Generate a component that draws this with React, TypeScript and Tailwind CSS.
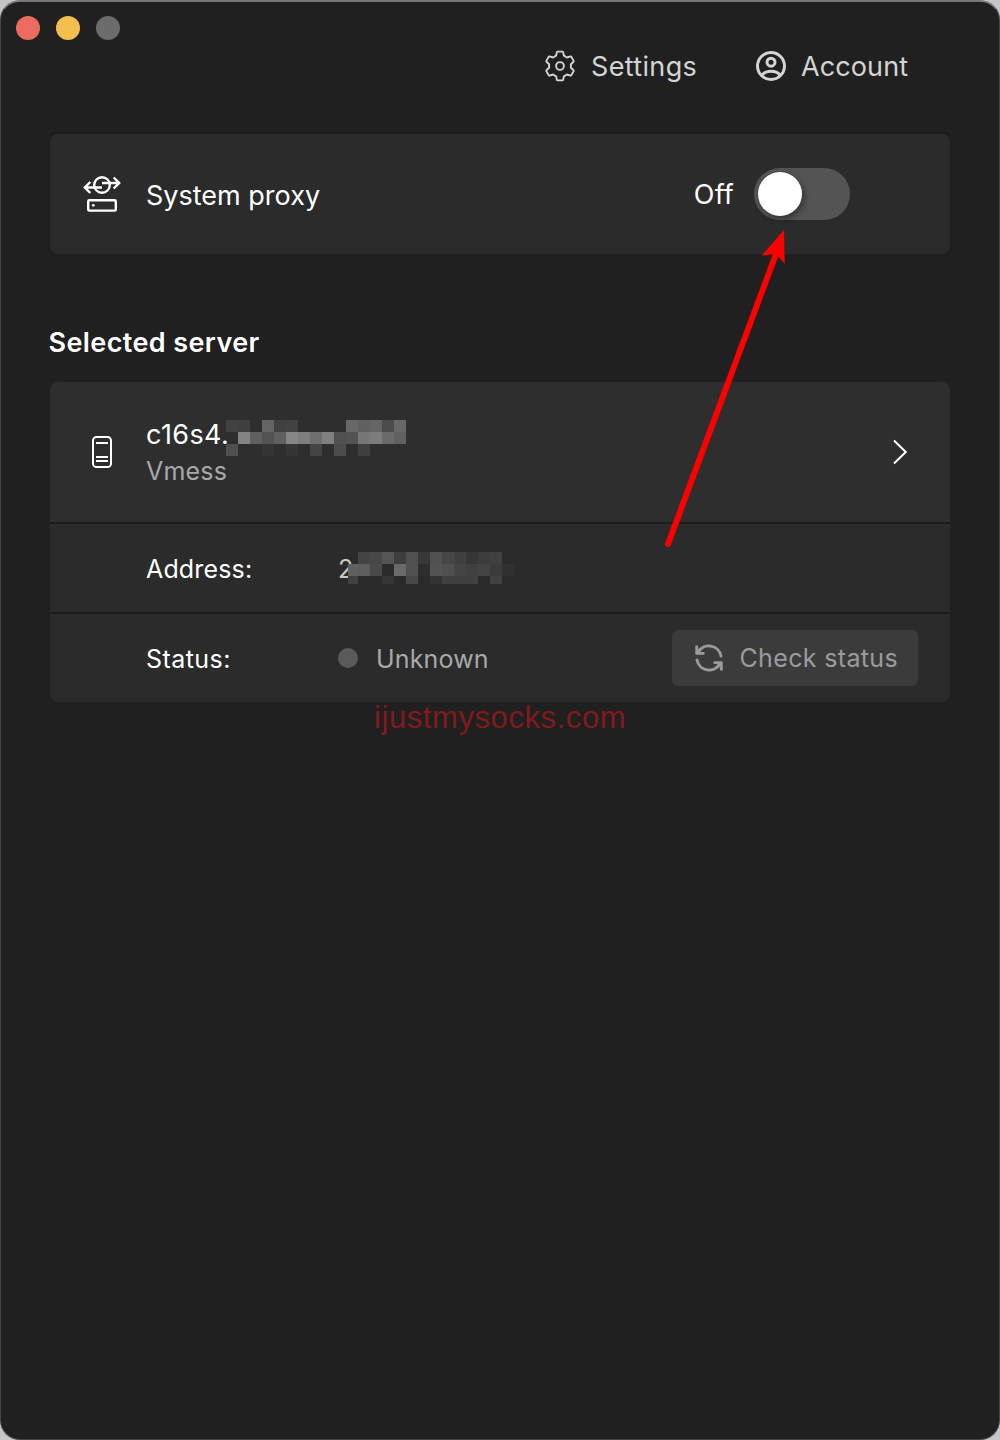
import React from "react";

const hostMosaic: string[][] = [
  ["#424242", "#404040", "", "#646464", "#404040", "#424242", "", "", "", "", "#686868", "#616161", "#666666", "#4c4c4c", "#686868"],
  ["", "#838383", "#606060", "#525252", "#606060", "#858585", "#7e7e7e", "#6e6e6e", "#808080", "#505050", "#525252", "#777777", "#7c7c7c", "#6a6a6a", "#606060"],
  ["#505050", "", "", "#343434", "", "#353535", "", "#444444", "", "#4c4c4c", "", "#404040", "", "", ""],
];

const addressMosaic: string[][] = [
  ["", "#444444", "#484848", "#555555", "#3e3e3e", "#505050", "#383838", "#505050", "#464646", "#404040", "#363636", "#3c3c3c", "#404040", ""],
  ["#606060", "#5e5e5e", "#4a4a4a", "#2b2b2b", "#6a6a6a", "#505050", "#2d2d2d", "#535353", "#505050", "#444444", "#404040", "#444444", "#3b3b3b", "#303030"],
  ["#404040", "", "", "#363636", "", "#484848", "", "#323232", "#404040", "#404040", "#404040", "", "#404040", ""],
];

function gearPath(): string {
  const tooth: [number, number][] = [
    [-5.2, -9.6],
    [-3.9, -10.3],
    [-3.1, -13.9],
    [-2.4, -14.4],
    [2.4, -14.4],
    [3.1, -13.9],
    [3.9, -10.3],
    [5.2, -9.6],
  ];
  const points: string[] = [];
  for (let k = 0; k < 6; k++) {
    const a = (k * Math.PI) / 3;
    for (const [x, y] of tooth) {
      const px = 16 + x * Math.cos(a) - y * Math.sin(a);
      const py = 16 + x * Math.sin(a) + y * Math.cos(a);
      points.push(`${px.toFixed(2)} ${py.toFixed(2)}`);
    }
  }
  return `M${points.join("L")}Z`;
}

function GearIcon() {
  return (
    <svg className="size-8" viewBox="0 0 32 32" fill="none" stroke="currentColor" strokeWidth="1.9" strokeLinejoin="round">
      <path d={gearPath()} />
      <circle cx="16" cy="16" r="3.9" />
    </svg>
  );
}

function AccountIcon() {
  return (
    <svg className="size-8" viewBox="0 0 32 32" fill="none" stroke="currentColor" strokeWidth="3">
      <circle cx="16" cy="16" r="13.5" />
      <circle cx="16" cy="12.2" r="4" />
      <path d="M6.6 25.2C9 22.6 12.3 21.3 16 21.3s7 1.3 9.4 3.9" />
    </svg>
  );
}

function ProxyIcon() {
  return (
    <svg className="h-10 w-10" viewBox="0 0 40 40" fill="none" stroke="currentColor" strokeWidth="2.4">
      <circle cx="20" cy="11" r="7.8" />
      <path d="M20 13.5H3M8.3 8 2.8 13.5 8.3 19M20 9H37M31.7 3.5 37.2 9l-5.5 5.5" />
      <rect x="6.2" y="26.2" width="27.6" height="10.4" rx="1.2" />
      <circle cx="11.3" cy="31.3" r="1.4" fill="currentColor" stroke="none" />
    </svg>
  );
}

function ServerIcon() {
  return (
    <svg className="h-8 w-5" viewBox="0 0 20 32" fill="none" stroke="currentColor" strokeWidth="2">
      <rect x="1" y="1" width="18" height="30" rx="3.6" />
      <path d="M4 7h12M4 21h12M4 25h12" />
    </svg>
  );
}

function RefreshIcon() {
  return (
    <svg className="h-[30px] w-[30px]" viewBox="0 0 30 30" fill="none" stroke="currentColor" strokeWidth="2.9" strokeLinecap="round" strokeLinejoin="round">
      <path d="M27 13A12.3 12.3 0 0 0 4.2 9.2" />
      <path d="M2.7 3.6v6.8h6.6M3.2 9.9l3-3.4" />
      <path d="M3 17A12.3 12.3 0 0 0 25.8 20.8" />
      <path d="M27.3 26.4v-6.8h-6.6M26.8 20.1l-3 3.4" />
    </svg>
  );
}

function Mosaic({ cells, className }: { cells: string[][]; className: string }) {
  return (
    <div className={className} aria-hidden="true">
      {cells.flat().map((color, i) => (
        <span key={i} style={{ backgroundColor: color || undefined }} />
      ))}
    </div>
  );
}

export default function App() {
  return (
    <div className="h-[1440px] w-[1000px] bg-[#c4c6c9] font-['Inter',sans-serif] text-white">
      <div className="relative flex h-full flex-col overflow-hidden rounded-[20px] border border-t-2 border-[#454545] border-t-[#777] bg-[#202020]">
        <div className="flex h-7 shrink-0 items-end gap-4 pl-[15px]">
          <span className="size-6 shrink-0 translate-y-[10px] rounded-full bg-[#ed6a5e]" />
          <span className="size-6 shrink-0 translate-y-[10px] rounded-full bg-[#f5bf4f]" />
          <span className="size-6 shrink-0 translate-y-[10px] rounded-full bg-[#6c6c6c]" />
        </div>

        <nav className="flex h-[72px] shrink-0 items-center pl-[543px] text-[27px] text-[#d4d4d4]">
          <button className="flex w-[211px] items-center gap-[15px]">
            <GearIcon />
            <span className="pt-0.5 tracking-[0.35px] whitespace-nowrap">Settings</span>
          </button>
          <button className="flex items-center gap-[14px]">
            <AccountIcon />
            <span className="pt-0.5 tracking-[0.1px] whitespace-nowrap">Account</span>
          </button>
        </nav>

        <main className="px-[49px] pt-8">
          <section className="flex h-[120px] items-center rounded-lg bg-[#2b2b2b] pr-[100px] pl-8 shadow-[0_0_0_2px_#1e1e1e]">
            <ProxyIcon />
            <span className="ml-6 flex-1 pt-1 text-[27px]">System proxy</span>
            <span className="pt-0.5 text-[27px] tracking-[0.2px]">Off</span>
            <button className="ml-5 flex h-[52px] w-24 items-center rounded-full bg-[#545454] p-1">
              <span className="size-11 rounded-full bg-white shadow-[2px_3px_6px_rgba(0,0,0,0.4)]" />
            </button>
          </section>

          <h2 className="-ml-[1.5px] pt-[71px] text-[27px] leading-9 font-semibold tracking-[0.4px]">Selected server</h2>

          <section className="mt-[21px] flex flex-col gap-0.5 overflow-hidden rounded-lg bg-[#1d1d1d]">
            <div className="flex h-[140px] items-center bg-[#2e2e2e] pr-[42px] pl-[42px]">
              <ServerIcon />
              <div className="ml-[34px] flex-1 pt-0.5">
                <div className="relative text-[27px] leading-9">
                  <span className="tracking-[0.4px]">c16s4.</span>
                  <Mosaic
                    cells={hostMosaic}
                    className="absolute top-[3px] left-[80px] grid grid-cols-[repeat(15,12px)] grid-rows-[repeat(3,12px)]"
                  />
                </div>
                <div className="text-[25px] leading-9 tracking-[0.2px] text-[#a8a8a8]">Vmess</div>
              </div>
              <svg className="h-[26px] w-4" viewBox="0 0 16 26" fill="none" stroke="currentColor" strokeWidth="2">
                <path d="M2 1.5 13.8 13 2 24.5" />
              </svg>
            </div>

            <div className="flex h-[88px] items-center bg-[#2b2b2b] pl-24 text-[25px]">
              <span className="w-48 pt-[3px] tracking-[0.15px]">Address:</span>
              <span className="relative leading-8 text-[#c8c8c8]">
                <span className="relative top-px">2</span>
                <Mosaic
                  cells={addressMosaic}
                  className="absolute top-0 left-[10px] grid grid-cols-[10px_repeat(13,12px)] grid-rows-[12px_12px_8px]"
                />
              </span>
            </div>

            <div className="flex h-[88px] items-center bg-[#2b2b2b] pr-8 pl-24 text-[25px]">
              <span className="w-48 pt-[3px] tracking-[0.45px]">Status:</span>
              <span className="size-5 rounded-full bg-[#5a5a5a]" />
              <span className="ml-[18px] flex-1 pt-[3px] tracking-[0.15px] text-[#a8a8a8]">Unknown</span>
              <button className="flex h-14 w-[246px] items-center rounded-md bg-[#3b3b3b] pl-[22px] text-[#9b9b9b]">
                <RefreshIcon />
                <span className="ml-[15.5px] pt-0.5 tracking-[0.35px] whitespace-nowrap">Check status</span>
              </button>
            </div>
          </section>
        </main>

        <div className="absolute top-[698px] left-[373px] font-['Liberation_Sans',sans-serif] text-[31px] leading-9 tracking-[0.58px] whitespace-nowrap text-[#801a1d]">
          ijustmysocks.com
        </div>

        <svg className="absolute top-[218px] left-[649px] h-[340px] w-[150px]" viewBox="650 220 150 340" fill="#ff0000">
          <path d="M668 544 776 254" stroke="#ff0000" strokeWidth="6" strokeLinecap="round" />
          <path d="M784 230 761.7 255.7 772.3 254.3 778.3 256.7 784.7 263.7Z" />
        </svg>
      </div>
    </div>
  );
}
